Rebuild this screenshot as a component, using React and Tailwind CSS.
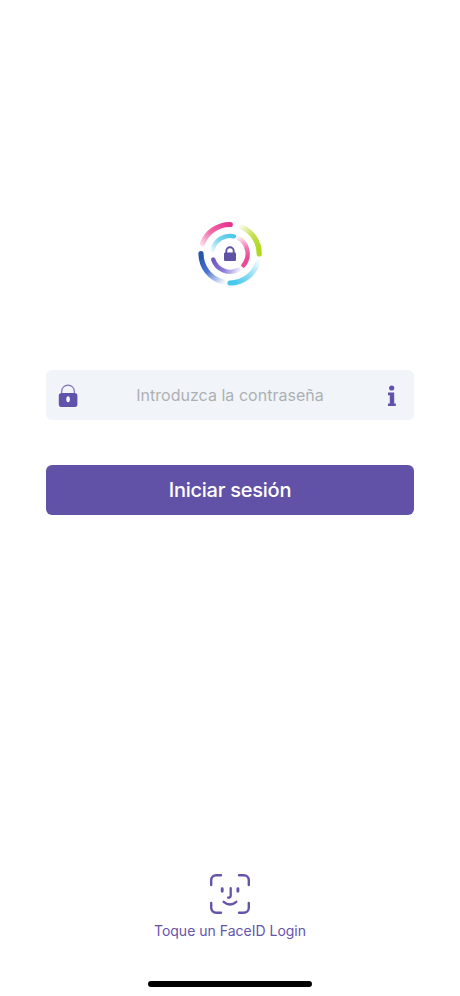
import React, { useState } from 'react';

function Logo() {
    return (
        <svg width="80" height="80" viewBox="0 0 80 80" fill="none" strokeLinecap="round">
            <defs>
                <linearGradient id="outerPink" gradientUnits="userSpaceOnUse" x1="12" y1="33" x2="38" y2="10">
                    <stop offset="0" stopColor="#fde3ef" />
                    <stop offset="0.45" stopColor="#f26ea9" />
                    <stop offset="1" stopColor="#e9358f" />
                </linearGradient>
                <linearGradient id="outerGreen" gradientUnits="userSpaceOnUse" x1="50" y1="12" x2="69" y2="34">
                    <stop offset="0" stopColor="#f9fceb" />
                    <stop offset="0.5" stopColor="#c6e058" />
                    <stop offset="1" stopColor="#b0d91f" />
                </linearGradient>
                <linearGradient id="outerCyan" gradientUnits="userSpaceOnUse" x1="68" y1="47" x2="44" y2="69">
                    <stop offset="0" stopColor="#f3fbfe" />
                    <stop offset="0.5" stopColor="#8bdcf1" />
                    <stop offset="1" stopColor="#46c6ea" />
                </linearGradient>
                <linearGradient id="outerBlue" gradientUnits="userSpaceOnUse" x1="11" y1="42" x2="33" y2="69">
                    <stop offset="0" stopColor="#2655ae" />
                    <stop offset="0.45" stopColor="#4a72d0" />
                    <stop offset="1" stopColor="#f1f5fd" />
                </linearGradient>
                <linearGradient id="innerCyan" gradientUnits="userSpaceOnUse" x1="22" y1="38" x2="42" y2="22">
                    <stop offset="0" stopColor="#effafe" />
                    <stop offset="0.5" stopColor="#7bd6f0" />
                    <stop offset="1" stopColor="#4cc8ea" />
                </linearGradient>
                <linearGradient id="innerPink" gradientUnits="userSpaceOnUse" x1="48" y1="23" x2="57" y2="44">
                    <stop offset="0" stopColor="#fef1f7" />
                    <stop offset="0.55" stopColor="#f07fb2" />
                    <stop offset="1" stopColor="#ea4a96" />
                </linearGradient>
                <linearGradient id="innerPurple" gradientUnits="userSpaceOnUse" x1="23" y1="46" x2="49" y2="56">
                    <stop offset="0" stopColor="#7059bb" />
                    <stop offset="0.5" stopColor="#8c7bd8" />
                    <stop offset="1" stopColor="#ece8fa" />
                </linearGradient>
            </defs>
            <g strokeWidth="5.2">
                <path d="M12.4 29.7A29.3 29.3 0 0 1 40.3 10.5" stroke="url(#outerPink)" />
                <path d="M51.5 12.8A29.3 29.3 0 0 1 69.2 40" stroke="url(#outerGreen)" />
                <path d="M68 48A29.3 29.3 0 0 1 40 69" stroke="url(#outerCyan)" />
                <path d="M33 68A29.3 29.3 0 0 1 11 39.5" stroke="url(#outerBlue)" />
            </g>
            <g strokeWidth="4.4">
                <path d="M22.5 36A18 18 0 0 1 44 22.3" stroke="url(#innerCyan)" />
                <path d="M48.5 24.2A18 18 0 0 1 53.5 51.3" stroke="url(#innerPink)" />
                <path d="M48.5 55.8A18 18 0 0 1 23.2 45.5" stroke="url(#innerPurple)" />
            </g>
            <rect x="34" y="38.4" width="12" height="8.6" rx="1.2" fill="#5f51a5" />
            <path d="M36.3 39V37a3.7 3.7 0 0 1 7.4 0V39" stroke="#5f51a5" strokeWidth="1.9" />
        </svg>
    );
}

function LockIcon() {
    return (
        <svg width="20" height="24" viewBox="0 0 20 24" fill="none">
            <path d="M3.7 10V7.4a6.3 6.3 0 0 1 12.6 0V10" stroke="#7d74b4" strokeWidth="1.2" />
            <rect x="0.8" y="9" width="18.6" height="14" rx="2.8" fill="#6152ab" />
            <ellipse cx="10.1" cy="15.2" rx="1.8" ry="3" fill="#f2f5fa" />
        </svg>
    );
}

function InfoIcon() {
    return (
        <svg width="10" height="24" viewBox="0 0 10 24" fill="#5f52a8">
            <circle cx="4.7" cy="4" r="2.6" />
            <path d="M1 8.6h6.2v10.8H8.8V22H1v-2.6h1.8v-8.2H1z" />
        </svg>
    );
}

function FaceIdIcon() {
    return (
        <svg width="42" height="42" viewBox="0 0 42 42" fill="none" stroke="#6554aa" strokeWidth="2.4" strokeLinecap="round" strokeLinejoin="round">
            <path d="M2.2 12V7.2A5 5 0 0 1 7.2 2.2H12M30 2.2h4.8a5 5 0 0 1 5 5V12M39.8 30v4.8a5 5 0 0 1-5 5H30M12 39.8H7.2a5 5 0 0 1-5-5V30" />
            <path d="M13.2 15.8v2.4M28.9 15.8v2.4" strokeWidth="2.9" />
            <path d="M21.7 15.2v7.2q0 2.3-2.6 2.3" strokeWidth="2.3" />
            <path d="M14.7 28.8q6.3 5.4 12.6 0" />
        </svg>
    );
}

function App() {
    const [password, setPassword] = useState('');

    return (
        <main className="flex h-[996px] w-full flex-col items-center bg-white pt-[214px] font-['Inter','Liberation_Sans',sans-serif]">
            <Logo />
            <form className="mt-[76px] w-[368px]" onSubmit={(e) => e.preventDefault()}>
                <div className="flex h-[50px] items-center rounded-md bg-[#f1f5fa] pt-0.5 pr-[17px] pl-3">
                    <LockIcon />
                    <input
                        type="password"
                        placeholder="Introduzca la contraseña"
                        value={password}
                        onChange={(e) => setPassword(e.target.value)}
                        className="min-w-0 flex-1 pr-[5px] pb-[3px] text-center text-base tracking-[0.02px] text-[#5f51a5] placeholder:text-[#adb0b2] focus:outline-none"
                    />
                    <InfoIcon />
                </div>
                <button type="submit" className="mt-[45px] h-[50px] w-full rounded-md bg-[#6152a7] pb-px text-xl font-medium tracking-[-0.25px] text-white">
                    Iniciar sesión
                </button>
            </form>
            <button type="button" className="mt-auto flex flex-col items-center">
                <FaceIdIcon />
                <span className="mt-[5px] text-sm leading-[22px] text-[#6554aa]">Toque un FaceID Login</span>
            </button>
            <div className="mt-[39px] mb-[9px] h-1.5 w-[164px] shrink-0 rounded-full bg-black" />
        </main>
    );
}

export default App;
